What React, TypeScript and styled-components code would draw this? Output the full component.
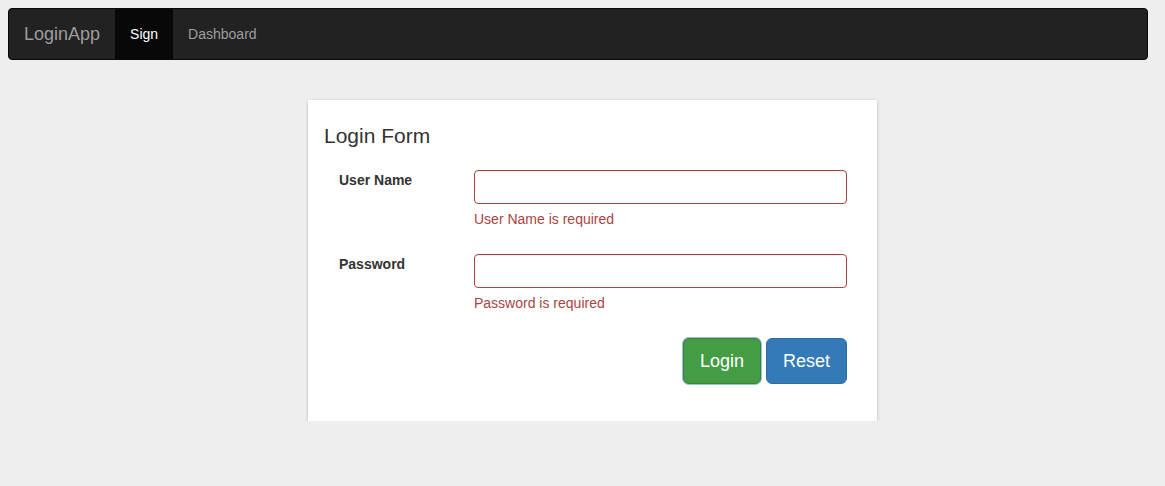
import styled, { createGlobalStyle } from 'styled-components';

const GlobalStyle = createGlobalStyle`
    html, body {
        margin: 0;
        padding: 0;
        background: #eeeeee;
        font-family: "Liberation Sans", Arial, sans-serif;
        font-size: 14px;
        color: #333;
    }
    body {
        padding: 8px 0 0 8px;
    }
    * {
        box-sizing: border-box;
    }
`;

const Navbar = styled.nav`
    width: 1140px;
    height: 52px;
    display: flex;
    align-items: stretch;
    background: #222222;
    border: 1px solid #080808;
    border-radius: 4px;
    overflow: hidden;
`;

const Brand = styled.a`
    display: flex;
    align-items: center;
    padding: 0 15px;
    font-size: 18px;
    color: #9d9d9d;
    text-decoration: none;
`;

const NavItem = styled.a<{ $active?: boolean }>`
    display: flex;
    align-items: center;
    padding: 0 15px;
    font-size: 14px;
    color: ${(p) => (p.$active ? '#fff' : '#9d9d9d')};
    background: ${(p) => (p.$active ? '#080808' : 'transparent')};
    text-decoration: none;
`;

const Panel = styled.section`
    width: 569px;
    margin: 40px 0 0 300px;
    padding: 25px 30px 37px 16px;
    background: #fff;
    box-shadow: 0 1px 3px rgba(0, 0, 0, 0.25);
`;

const Title = styled.h3`
    margin: 0 0 23px;
    font-size: 21px;
    font-weight: 400;
    line-height: 22px;
    color: #333;
`;

const Group = styled.div`
    display: grid;
    grid-template-columns: 135px 373px;
    padding-left: 15px;
    margin-bottom: 25px;
`;

const Label = styled.label`
    font-weight: 700;
    line-height: 20px;
`;

const Field = styled.div`
    display: flex;
    flex-direction: column;
`;

const Input = styled.input`
    height: 34px;
    width: 100%;
    padding: 6px 12px;
    border: 1px solid #a94442;
    border-radius: 4px;
    font-size: 14px;
    font-family: inherit;
    outline: none;
    box-shadow: inset 0 1px 1px rgba(0, 0, 0, 0.075);
`;

const Help = styled.span`
    margin-top: 5px;
    line-height: 20px;
    color: #a94442;
`;

const Actions = styled.div`
    display: flex;
    justify-content: flex-end;
    gap: 5px;
`;

const Button = styled.button<{ $variant: 'success' | 'primary' }>`
    height: 46px;
    padding: 10px 16px;
    font-size: 18px;
    font-family: inherit;
    line-height: 24px;
    color: #fff;
    border-radius: 6px;
    border: 1px solid ${(p) => (p.$variant === 'success' ? '#398439' : '#2e6da4')};
    background: ${(p) => (p.$variant === 'success' ? '#449d44' : '#337ab7')};
    box-shadow: ${(p) => (p.$variant === 'success' ? '0 0 0 1px #9bbde0' : 'none')};
`;

export default function App() {
    return (
        <>
            <GlobalStyle />
            <Navbar>
                <Brand>LoginApp</Brand>
                <NavItem $active>Sign</NavItem>
                <NavItem>Dashboard</NavItem>
            </Navbar>
            <Panel>
                <Title>Login Form</Title>
                <Group>
                    <Label>User Name</Label>
                    <Field>
                        <Input type="text" />
                        <Help>User Name is required</Help>
                    </Field>
                </Group>
                <Group>
                    <Label>Password</Label>
                    <Field>
                        <Input type="password" />
                        <Help>Password is required</Help>
                    </Field>
                </Group>
                <Actions>
                    <Button $variant="success" style={{ width: 78 }}>Login</Button>
                    <Button $variant="primary" style={{ width: 81 }}>Reset</Button>
                </Actions>
            </Panel>
        </>
    );
}
